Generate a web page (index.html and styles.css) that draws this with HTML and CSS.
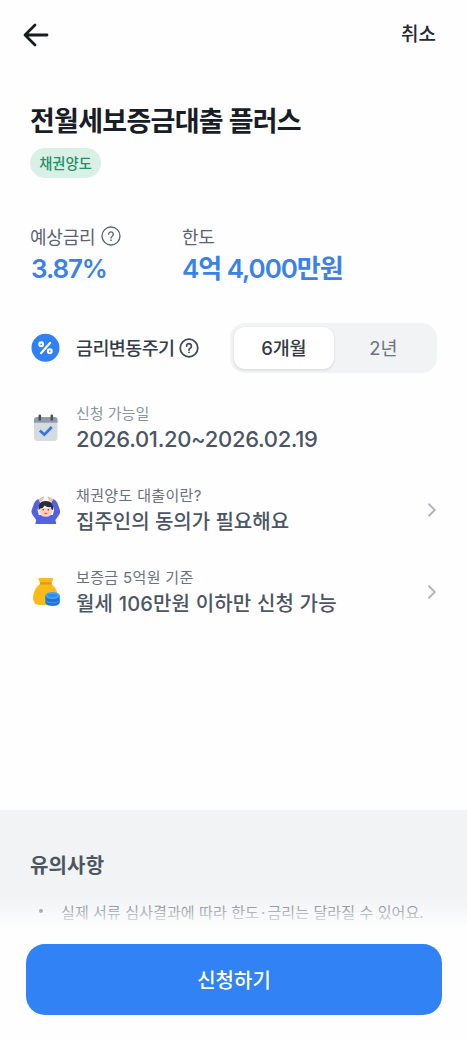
FILE: index.html
```html
<!DOCTYPE html>
<html lang="ko">
<head>
<meta charset="utf-8">
<meta name="viewport" content="width=device-width, initial-scale=1">
<title>전월세보증금대출 플러스</title>
<link rel="stylesheet" href="styles.css">
</head>
<body>
<div class="screen">
  <header class="topbar">
    <svg class="back" viewBox="0 0 26 24" fill="none"><path d="M12 2 2 12l10 10M2.5 12H24" stroke="#191b22" stroke-width="2.8" stroke-linecap="round" stroke-linejoin="round"/></svg>
    <span class="cancel">취소</span>
  </header>
  <main class="content">
    <h1 class="title">전월세보증금대출 플러스</h1>
    <span class="tag">채권양도</span>
    <section class="summary">
      <div class="rate">
        <div class="label"><span>예상금리</span>
          <svg class="help" viewBox="0 0 20 20" fill="none" stroke="#5b6472" stroke-width="1.35"><circle cx="10" cy="10" r="9"/><path d="M7.7 8.2a2.3 2.3 0 1 1 3.7 1.8C10.5 10.6 10 11 10 12" stroke-linecap="round"/><circle cx="10" cy="14.2" r=".5" fill="#5b6472" stroke-width=".8"/></svg>
        </div>
        <div class="value value-rate">3.87%</div>
      </div>
      <div>
        <div class="label">한도</div>
        <div class="value value-limit">4억 4,000만원</div>
      </div>
    </section>
    <section class="period">
      <svg class="icon" viewBox="0 0 30 30" fill="none"><circle cx="15.5" cy="14.8" r="14" fill="#3181f4"/><g stroke="#fff" stroke-width="2.1" stroke-linecap="round"><circle cx="11.2" cy="11.3" r="1.9"/><circle cx="19.8" cy="18.3" r="1.9"/><path d="m20.2 9.8-9.2 10.4"/></g></svg>
      <span class="period-name">금리변동주기</span>
      <svg class="help" viewBox="0 0 20 20" fill="none" stroke="#414957" stroke-width="1.75"><circle cx="10" cy="10" r="8.8"/><path d="M7.6 8.2a2.4 2.4 0 1 1 3.8 1.8C10.5 10.6 10 11 10 12" stroke-linecap="round"/><circle cx="10" cy="14.3" r=".5" fill="#414957" stroke-width="1"/></svg>
      <div class="segment">
        <span class="option selected">6개월</span>
        <span class="option">2년</span>
      </div>
    </section>
    <section class="info">
      <div class="row">
        <svg class="icon" viewBox="0 0 30 30" fill="none"><rect x="4" y="4" width="23.5" height="24" rx="3.5" fill="#d6dbe1"/><path d="M4 9.7V6.8Q4 4 7.2 4h17.1q3.2 0 3.2 2.8v2.9z" fill="#919ba8"/><path d="M9.8 2.7v3.8M21.8 2.7v3.8" stroke="#46505d" stroke-width="2.6" stroke-linecap="round"/><path d="m9.8 17.5 4.5 4.2 7.5-7.7" stroke="#3478dd" stroke-width="2.7"/></svg>
        <div class="row-text">
          <div class="caption caption-light">신청 가능일</div>
          <div class="detail detail-date">2026.01.20~2026.02.19</div>
        </div>
      </div>
      <div class="row">
        <svg class="icon" viewBox="0 0 30 30" fill="none"><path d="M8.5 4Q5.5 5 4.2 8L1.7 15q-.8 2.5.9 4.9L6.2 25l-.9 4h21l-.9-4 3.6-5.1q1.7-2.4.9-4.9L27.4 8q-1.3-3-4.3-4l-1.7 3.6 2.7 7.2-1.7 6.4H9.2l-1.7-6.4L10.2 7.6z" fill="#5361e3"/><path d="M8.5 4l4-2.3q2-.7 1.7.7Q13.5 4.7 10 7.6zM23.1 4l-4-2.3q-2-.7-1.7.7.7 2.3 4.2 5.2z" fill="#edbfa9"/><path d="M8 20h15.6v1.7q-7.8 3.5-15.6 0z" fill="#5361e3"/><path d="M9.2 13v2.8q.4 6 6.6 6t6.6-6V13z" fill="#ffd1b9"/><path d="M8.5 15Q7.4 6 15.8 5.9 24.2 6 23.1 15l-1.5-.6-.9-2.4q-4.2.7-6-1.5-1.5 3-4.4 3.1z" fill="#292c3b"/><circle cx="13.2" cy="14.8" r=".8" fill="#41313b"/><circle cx="18.3" cy="14.8" r=".8" fill="#41313b"/><path d="M14.3 18q1.5 1.2 3 0" stroke="#db6463" stroke-width="1.1"/></svg>
        <div class="row-text">
          <div class="caption caption-wide">채권양도 대출이란?</div>
          <div class="detail">집주인의 동의가 필요해요</div>
        </div>
        <svg class="chevron" viewBox="0 0 10 16" fill="none"><path d="m2 2.3 5.8 5.7L2 13.7" stroke="#afb4bb" stroke-width="1.9" stroke-linecap="round"/></svg>
      </div>
      <div class="row">
        <svg class="icon" viewBox="0 0 30 30" fill="none"><path d="M8.5 2.2q-.4-1.2 1-1.2h12.6q1.4 0 1 1.2L21.3 6.8Q27.5 11.5 28 20q.4 7.4-5.7 8H8.8Q2.7 27.4 3.1 20q.4-8.5 7.2-13.2z" fill="#fcbb16"/><path d="M10 5.3h11.6v2.2H10z" fill="#e39228"/><path d="M15.3 18.5v6.7c0 4.9 14.5 4.9 14.5 0v-6.7z" fill="#1e72d8"/><path d="M15.3 21.7c0 4.5 14.5 4.5 14.5 0v1.2c0 4.5-14.5 4.5-14.5 0z" fill="#3795f0"/><ellipse cx="22.55" cy="18.5" rx="7.25" ry="3.5" fill="#42a3fa"/><ellipse cx="22.55" cy="18.5" rx="4.8" ry="1.8" fill="#2b8cec"/></svg>
        <div class="row-text">
          <div class="caption caption-wide">보증금 5억원 기준</div>
          <div class="detail detail-rent">월세 106만원 이하만 신청 가능</div>
        </div>
        <svg class="chevron" viewBox="0 0 10 16" fill="none"><path d="m2 2.3 5.8 5.7L2 13.7" stroke="#afb4bb" stroke-width="1.9" stroke-linecap="round"/></svg>
      </div>
    </section>
  </main>
  <section class="notice">
    <h2 class="notice-title">유의사항</h2>
    <div class="notice-item"><span class="bullet"></span><span>실제 서류 심사결과에 따라 한도<span class="dot">·</span>금리는 달라질 수 있어요.</span></div>
  </section>
  <footer class="bottom">
    <div class="fade"></div>
    <div class="bottom-body"><button class="apply">신청하기</button></div>
  </footer>
</div>
</body>
</html>
```

FILE: styles.css
```css
* { box-sizing: border-box; }
body { margin: 0; background: #fefefe; font-family: Inter, "Noto Sans CJK KR", sans-serif; color: #4c5564; }
h1, h2 { margin: 0; }
svg { display: block; flex: none; }
.screen { position: relative; width: 467px; height: 1040px; overflow: hidden; display: flex; flex-direction: column; white-space: nowrap; }
.topbar { height: 69px; padding: 0 31px 0 23px; display: flex; align-items: center; justify-content: space-between; }
.back { width: 26px; height: 24px; }
.cancel { font-size: 19px; font-weight: 500; line-height: 28px; color: #252932; }
.content { height: 741px; padding: 33px 30px 0 30px; }
.title { font-size: 27px; font-weight: 700; line-height: 40px; letter-spacing: -0.72px; color: #191d25; }
.tag { display: flex; align-items: center; justify-content: center; margin-top: 6px; padding-bottom: 2px; width: 71px; height: 30px; border-radius: 15px; background: #d8f0e6; color: #239166; font-size: 14.3px; font-weight: 500; }
.summary { display: flex; margin-top: 45px; }
.rate { width: 152px; }
.label { display: flex; align-items: center; gap: 6px; height: 26px; font-size: 18px; letter-spacing: -0.2px; color: #5b6472; }
.help { width: 20px; height: 20px; }
.value { height: 39px; line-height: 39px; font-size: 26px; font-weight: 600; color: #3a82e8; }
.value-rate { padding-left: 1px; letter-spacing: -1.1px; }
.value-limit { letter-spacing: -1.05px; }
.period { display: flex; align-items: center; margin-top: 35px; height: 50px; }
.icon { width: 30px; height: 30px; }
.period-name { margin: 0 4px 0 16px; padding-bottom: 2px; font-size: 18.5px; font-weight: 500; letter-spacing: -0.6px; color: #343c49; }
.segment { display: flex; margin-left: auto; width: 207px; height: 50px; padding: 4px; border-radius: 15px; background: #f1f3f5; }
.option { flex: 1; display: flex; align-items: center; justify-content: center; padding-bottom: 2px; font-size: 18.5px; letter-spacing: -0.2px; color: #6c7482; }
.selected { border-radius: 11px; background: #fff; box-shadow: 0 1px 3px rgba(20, 30, 45, 0.13); font-weight: 500; color: #343a46; }
.info { display: grid; gap: 30px; margin-top: 29px; }
.row { display: flex; align-items: center; height: 52px; }
.row-text { flex: 1; margin-left: 16px; }
.caption { height: 24px; line-height: 24px; font-size: 15px; color: #69717e; }
.caption-light { color: #8c949e; }
.caption-wide { letter-spacing: 0.35px; }
.detail { height: 28px; line-height: 28px; font-size: 20px; font-weight: 500; color: #4c5564; }
.detail-date { font-size: 22px; font-weight: 550; line-height: 27px; letter-spacing: -0.32px; }
.detail-rent { letter-spacing: 0.18px; }
.chevron { width: 10px; height: 16px; }
.notice { height: 230px; padding: 42px 30px 0; background: #f1f3f5; }
.notice-title { font-size: 20px; font-weight: 600; line-height: 28px; letter-spacing: 0.15px; }
.notice-item { display: flex; align-items: center; margin-top: 18px; height: 26px; padding-left: 9px; font-size: 15px; letter-spacing: 0.1px; color: #69717e; }
.dot { margin: 0 2px; }
.bullet { width: 4px; height: 4px; border-radius: 50%; background: #69717e; margin-right: 18px; }
.bottom { position: absolute; left: 0; right: 0; bottom: 0; height: 143px; }
.fade { height: 32px; background: linear-gradient(rgba(254, 254, 254, 0), #fefefe); }
.bottom-body { height: 111px; padding: 15px 25px 0 26px; background: #fefefe; }
.apply { display: block; width: 100%; height: 71px; border: 0; border-radius: 19px; background: #3182f5; color: #fff; font: 500 20px Inter, "Noto Sans CJK KR", sans-serif; }
```
